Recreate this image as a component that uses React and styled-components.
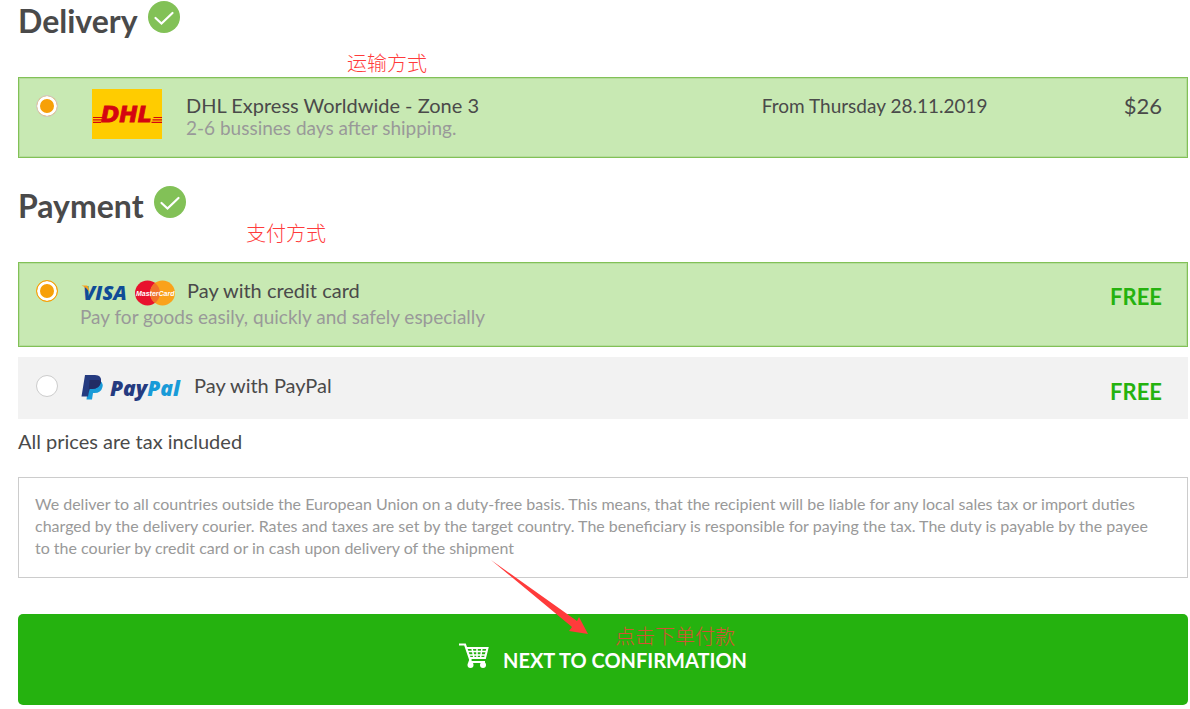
import React from "react";
import styled, { createGlobalStyle } from "styled-components";

export default function App() {
    return (
        <>
            <GlobalStyle />
            <Page>
                <Section>
                    <Heading>Delivery <CheckBadge /></Heading>
                    <Note $left="329px" $top="52px">运输方式</Note>
                    <Option $selected $height="81px">
                        <Radio id="dhl" name="delivery" defaultChecked />
                        <DeliveryBody>
                            <DhlLogo />
                            <DeliveryInfo>
                                <label htmlFor="dhl">DHL Express Worldwide - Zone 3</label>
                                <Description>2-6 bussines days after shipping.</Description>
                            </DeliveryInfo>
                            <DeliveryTerms>
                                <DeliveryDate>From Thursday 28.11.2019</DeliveryDate>
                                <Price>$26</Price>
                            </DeliveryTerms>
                        </DeliveryBody>
                    </Option>
                </Section>

                <Section>
                    <Heading>Payment <CheckBadge /></Heading>
                    <Note $left="228px" $top="37px">支付方式</Note>
                    <Option $selected $height="85px">
                        <Radio id="card" name="payment" $accent defaultChecked />
                        <PaymentBody>
                            <Method>
                                <CardLogos />
                                <label htmlFor="card">Pay with credit card</label>
                            </Method>
                            <Description>Pay for goods easily, quickly and safely especially</Description>
                        </PaymentBody>
                        <Free>FREE</Free>
                    </Option>
                    <Option $height="62px">
                        <Radio id="paypal" name="payment" />
                        <PaymentBody>
                            <Method>
                                <PaypalLogo />
                                <label htmlFor="paypal">Pay with PayPal</label>
                            </Method>
                        </PaymentBody>
                        <Free>FREE</Free>
                    </Option>
                </Section>

                <TaxInfo>All prices are tax included</TaxInfo>
                <Terms>
                    We deliver to all countries outside the European Union on a duty-free basis. This means, that the recipient will be liable for any local sales tax or import duties charged by the delivery courier. Rates and taxes are set by the target country. The beneficiary is responsible for paying the tax. The duty is payable by the payee to the courier by credit card or in cash upon delivery of the shipment
                </Terms>

                <Footer>
                    <NextButton type="button">
                        <CartIcon />
                        <span>NEXT TO CONFIRMATION</span>
                    </NextButton>
                    <Arrow viewBox="0 0 98 75" aria-hidden="true">
                        <path d="M0 0 L86 61 L88 57 L97 74 L78 71 L81 67 Z" fill="#ff3b3b" />
                    </Arrow>
                    <Note $left="calc(50% + 12px)" $top="12px" $faded>点击下单付款</Note>
                </Footer>
            </Page>
        </>
    );
}

function CheckBadge() {
    return (
        <Badge viewBox="0 0 32 32" aria-hidden="true">
            <circle cx="16" cy="16" r="16" fill="#82c157" />
            <path d="M7.500 17L13.500 22.500L24.500 12" fill="none" stroke="#fff" strokeWidth="2.2" strokeLinecap="round" />
        </Badge>
    );
}

function DhlLogo() {
    return (
        <svg width="70" height="50" viewBox="0 0 70 50" role="img" aria-label="DHL">
            <rect width="70" height="50" fill="#fc0" />
            <path d="M1 28.5H11M1 30.900H10M1 33.300H9M61.500 28.500H70M60.500 30.900H70M59.500 33.300H70" stroke="#d40511" strokeWidth="1.2" />
            <text x="9" y="33" fill="#d40511" stroke="#d40511" strokeWidth=".9" fontFamily="DejaVu Sans" fontSize="22" fontWeight="700" fontStyle="italic">DHL</text>
        </svg>
    );
}

function CardLogos() {
    return (
        <svg width="95" height="26" viewBox="0 0 95 26" role="img" aria-label="Visa, MasterCard">
            <text x="3" y="20" fill="#0f4c97" fontFamily="Open Sans" fontSize="20" fontWeight="800" fontStyle="italic">VISA</text>
            <path d="M1.500 5.500H6.500Q8 5.500 8.500 7.500L9.500 12.500Q7 7.500 1.500 5.500Z" fill="#f5a11c" />
            <circle cx="67.500" cy="13" r="12.500" fill="#e8112d" />
            <circle cx="82.500" cy="13" r="12.500" fill="#faa21b" />
            <path d="M75 3A12.500 12.500 0 0 1 75 23A12.500 12.500 0 0 1 75 3Z" fill="#f0722a" />
            <text x="56" y="16" fill="#fff" fontFamily="Liberation Sans" fontSize="7" fontWeight="700" fontStyle="italic">MasterCard</text>
        </svg>
    );
}

function PaypalLogo() {
    return (
        <svg width="102" height="28" viewBox="0 2 102 28" role="img" aria-label="PayPal">
            <path d="M9 7H18Q23.500 8.500 22.500 14Q21 20 14.500 20H13L12 26.500H6.500Z" fill="#199bd8" />
            <path d="M5 2H15Q22 2 21 9Q19.500 16 12 16H9.500L8 23.500H1.500Z" fill="#253b80" />
            <path d="M9.500 7H18.500Q21 7.500 21 9Q19.500 16 12 16H9.500L8.500 20Z" fill="#222d65" />
            <text x="30" y="23" fontFamily="Open Sans" fontSize="21" fontWeight="800" fontStyle="italic">
                <tspan fill="#253b80">Pay</tspan><tspan fill="#199bd8">Pal</tspan>
            </text>
        </svg>
    );
}

function CartIcon() {
    return (
        <Cart viewBox="0 0 30 26" aria-hidden="true">
            <path d="M0 1.500H6L12 19H26" strokeWidth="2.200" />
            <path d="M7 5H28.500L26 15H10.500" strokeWidth="2" />
            <path d="M8 8.500H27.500M9 12H27M13 5L15 15M18 5V15M23 5L21.500 15" strokeWidth="1.500" />
            <path d="M12 15L10 20" strokeWidth="2" />
            <circle cx="11.500" cy="22" r="3" fill="#fff" stroke="none" />
            <circle cx="24" cy="22" r="3" fill="#fff" stroke="none" />
        </Cart>
    );
}

const GlobalStyle = createGlobalStyle`
    * {
        box-sizing: border-box;
    }

    body {
        margin: 0;
        background: #fff;
        color: #4a4a4a;
        font-family: Lato, "Noto Sans CJK SC", sans-serif;
        font-size: 20px;
        line-height: 24px;
    }
`

const Page = styled.main`
    padding: 1px 2px 4px 18px;
`

const Section = styled.section`
    position: relative;

    & + & {
        margin-top: 28px;
    }
`

const Heading = styled.h2`
    display: flex;
    align-items: flex-start;
    gap: 10px;
    margin: 0 0 36px;
    font-size: 32px;
    line-height: 40px;
    font-weight: 700;
`

const Badge = styled.svg`
    width: 32px;
    height: 32px;
`

const Note = styled.span`
    position: absolute;
    left: ${props => props.$left};
    top: ${props => props.$top};
    color: #ff3b3b;
    opacity: ${props => props.$faded ? 0.8 : 1};
    font-family: "Noto Sans CJK SC", sans-serif;
    font-weight: 300;
    line-height: 20px;
    pointer-events: none;
`

const Option = styled.div`
    display: flex;
    align-items: flex-start;
    gap: 22px;
    min-height: ${props => props.$height};
    padding: 17px 25px 0 17px;
    border: 1px solid ${props => props.$selected ? "#82c157" : "#f2f2f2"};
    background: ${props => props.$selected ? "#c8e9b3" : "#f2f2f2"};
    box-shadow: ${props => props.$selected ? "inset 0 0 0 1px #b5dd9c" : "none"};

    & + & {
        margin-top: 10px;
    }
`

const Radio = styled.input.attrs({ type: "radio" })`
    appearance: none;
    flex: none;
    width: 22px;
    height: 22px;
    margin: 0;
    border: 1px solid #ccc;
    border-radius: 50%;
    background: #fff;

    &:checked {
        border-color: ${props => props.$accent ? "#f7a008" : "#ccc"};
        background: #f7a008;
        box-shadow: inset 0 0 0 3px #fff;
    }
`

const DeliveryBody = styled.div`
    display: flex;
    flex: 1;
    align-items: flex-start;
    margin: -6px 0 0 12px;
`

const DeliveryInfo = styled.div`
    flex: 59;
    padding: 4px 0 0 24px;
`

const DeliveryTerms = styled.div`
    display: flex;
    flex: 41;
    justify-content: space-between;
    padding-top: 5px;
`

const DeliveryDate = styled.span`
    font-size: 19px;
`

const Description = styled.div`
    color: #999;
    font-size: 19px;
    line-height: 22px;
`

const Price = styled.span`
    font-size: 22px;
`

const PaymentBody = styled.div`
    flex: 1;
`

const Method = styled.div`
    display: flex;
    align-items: flex-start;
    gap: 12px;
    height: 26px;
    line-height: 20px;
`

const Free = styled.strong`
    padding-top: 5px;
    color: #25b20f;
    font-size: 22px;
`

const TaxInfo = styled.p`
    margin: 10px 0 24px;
`

const Terms = styled.p`
    margin: 0 0 36px;
    padding: 15px 24px 18px 16px;
    border: 1px solid #ccc;
    color: #999;
    font-size: 16px;
    line-height: 22px;
`

const Footer = styled.footer`
    position: relative;
`

const NextButton = styled.button`
    display: flex;
    align-items: center;
    justify-content: center;
    gap: 14px;
    width: 100%;
    height: 91px;
    padding: 0;
    border: 0;
    border-radius: 5px;
    background: #25b20f;
    color: #fff;
    font: inherit;
    font-weight: 700;
    cursor: pointer;
`

const Cart = styled.svg`
    width: 30px;
    height: 26px;
    margin-bottom: 8px;
    fill: none;
    stroke: #fff;
`

const Arrow = styled.svg`
    position: absolute;
    left: calc(50% - 112px);
    top: -54px;
    width: 98px;
    height: 75px;
    pointer-events: none;
`
